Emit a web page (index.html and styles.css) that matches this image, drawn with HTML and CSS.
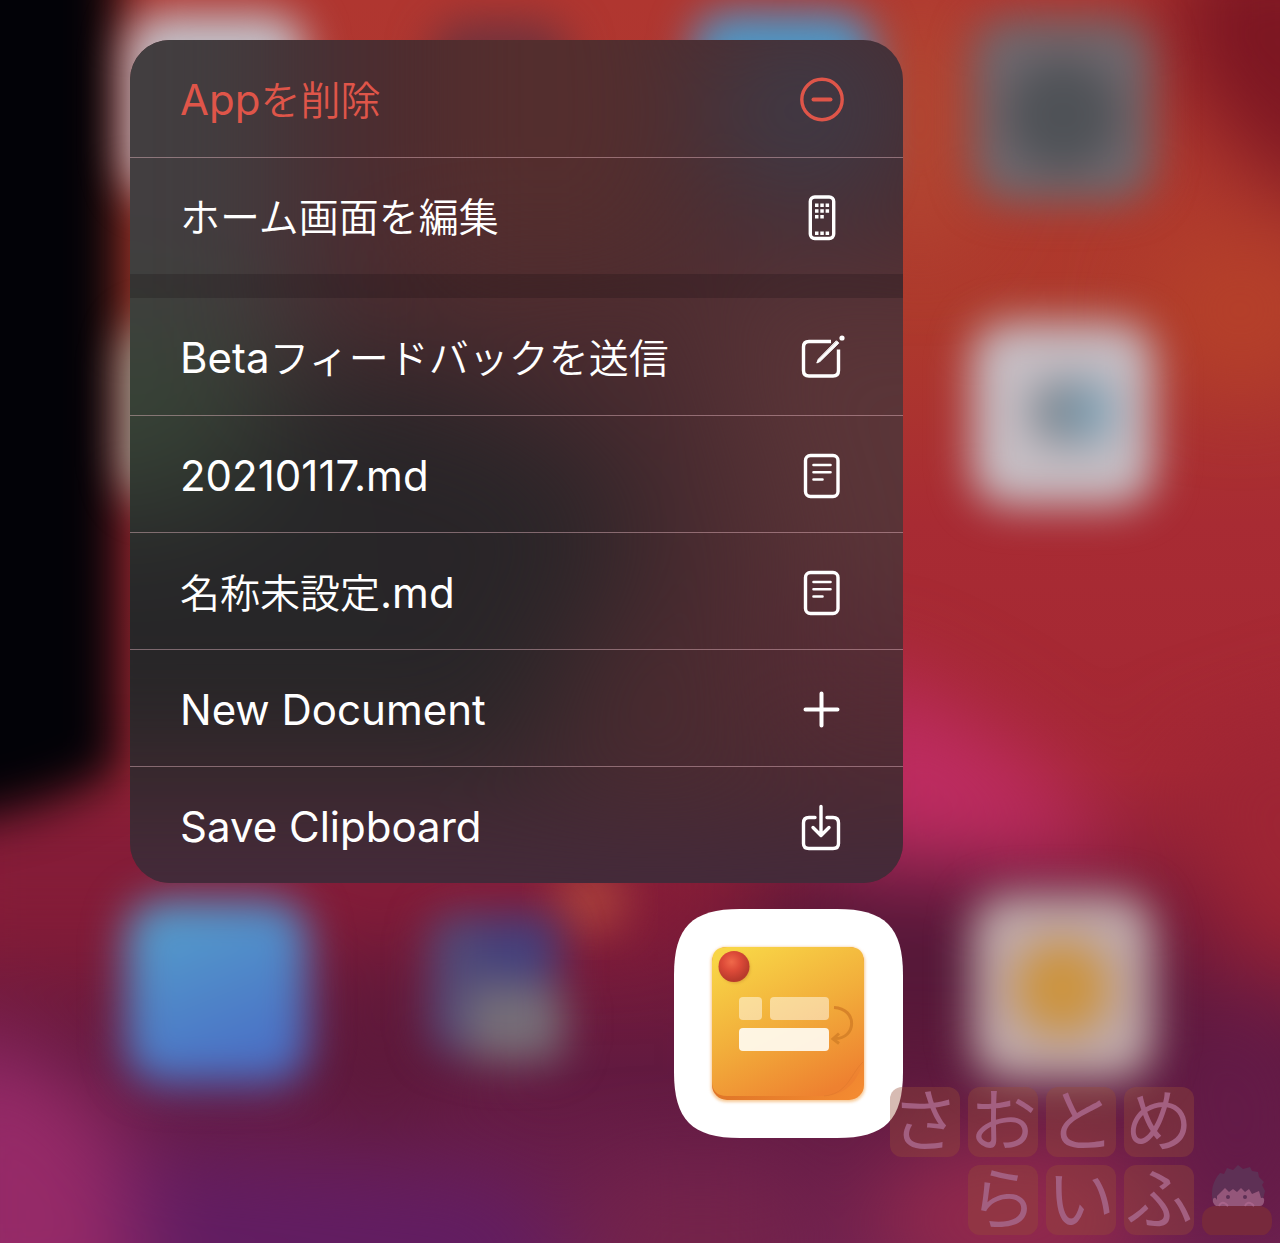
FILE: index.html
```html
<!DOCTYPE html>
<html lang="ja">
<head>
<meta charset="utf-8">
<meta name="viewport" content="width=device-width, initial-scale=1">
<title>ホーム画面</title>
<link rel="stylesheet" href="styles.css">
</head>
<body>
<div class="screen">
  <svg class="wallpaper" viewBox="0 0 1280 1243" preserveAspectRatio="xMidYMid slice" aria-hidden="true">
    <defs>
      <filter id="soft" x="-50%" y="-50%" width="200%" height="200%" color-interpolation-filters="sRGB"><feGaussianBlur stdDeviation="44"/></filter>
      <filter id="edge" x="-50%" y="-50%" width="200%" height="200%" color-interpolation-filters="sRGB"><feGaussianBlur stdDeviation="24"/></filter>
      <filter id="app" x="-50%" y="-50%" width="200%" height="200%" color-interpolation-filters="sRGB"><feGaussianBlur stdDeviation="21"/></filter>
      <linearGradient id="sky" x1="0" y1="0" x2="0" y2="1">
        <stop offset="0" stop-color="#b03630"/><stop offset=".25" stop-color="#ae3a2c"/>
        <stop offset=".42" stop-color="#a82b33"/><stop offset=".62" stop-color="#a42734"/>
        <stop offset=".74" stop-color="#7d1b38"/><stop offset=".86" stop-color="#621a40"/>
        <stop offset="1" stop-color="#6e2150"/>
      </linearGradient>
      <linearGradient id="blue" x1="0" y1="0" x2=".4" y2="1">
        <stop offset="0" stop-color="#56a4cc"/><stop offset="1" stop-color="#4a70c6"/>
      </linearGradient>
    </defs>
    <rect width="1280" height="1243" fill="url(#sky)"/>
    <g filter="url(#soft)">
      <path d="M1170-60h200v280q-110-20-200-160z" fill="#7c1622"/>
      <ellipse cx="1240" cy="310" rx="90" ry="80" fill="#b5402a"/>
      <ellipse cx="920" cy="120" rx="60" ry="130" fill="#b24832"/>
      <path d="M840 660q200 70 280 200l-280 10z" fill="#be2c62"/>
      <path d="M-80 800h760v140h-760z" fill="#841c38"/>
      <path d="M760 870q240-10 380 50l60 160-440-20z" fill="#561839"/>
      <path d="M1170 760l190-60v270l-110-10z" fill="#9e2534"/>
      <path d="M-80 1030q120 0 200 100l60 200h-260z" fill="#962a68"/>
      <path d="M120 1150l400 30 60 140h-440z" fill="#611d62"/>
      <path d="M600 1170h200v160h-200z" fill="#74234a"/>
      <ellipse cx="1010" cy="1220" rx="140" ry="80" fill="#92294c"/>
      <ellipse cx="1240" cy="1120" rx="70" ry="120" fill="#641b48"/>
      <ellipse cx="380" cy="1030" rx="60" ry="90" fill="#5d193a"/>
    </g>
    <path d="M-80-80h200v850q-60 40-200 60z" fill="#020207" filter="url(#edge)"/>
    <ellipse cx="590" cy="900" rx="34" ry="30" fill="#b44a3c" filter="url(#edge)"/>
    <g filter="url(#app)">
      <rect x="126" y="14" width="180" height="184" rx="36" fill="#c2c2ca"/>
      <rect x="430" y="20" width="140" height="170" rx="36" fill="#72323c"/>
      <rect x="692" y="12" width="182" height="186" rx="36" fill="#4c98c8"/>
      <rect x="124" y="322" width="180" height="180" rx="36" fill="#98a89a"/>
      <rect x="973" y="18" width="180" height="184" rx="36" fill="#6e686e"/>
      <ellipse cx="1063" cy="115" rx="56" ry="56" fill="#4f5257"/>
      <rect x="972" y="322" width="182" height="184" rx="36" fill="#c6bec4"/>
      <ellipse cx="1066" cy="412" rx="36" ry="34" fill="#7a8690"/>
      <ellipse cx="1094" cy="412" rx="22" ry="34" fill="#80a2b6"/>
      <rect x="126" y="900" width="182" height="184" rx="36" fill="url(#blue)"/>
      <rect x="430" y="914" width="70" height="140" rx="24" fill="#504a78"/>
      <rect x="480" y="914" width="80" height="70" rx="20" fill="#44407c"/>
      <rect x="466" y="984" width="98" height="78" rx="20" fill="#766e78"/>
      <rect x="972" y="894" width="182" height="186" rx="36" fill="#bfa9aa"/>
      <ellipse cx="1062" cy="988" rx="48" ry="48" fill="#cc9440"/>
    </g>
  </svg>

  <main class="content">
    <nav class="menu" aria-label="Appのアクション">
      <svg class="tint" viewBox="0 0 773 843" preserveAspectRatio="none" aria-hidden="true">
        <defs><filter id="melt" x="-60%" y="-60%" width="220%" height="220%" color-interpolation-filters="sRGB"><feGaussianBlur stdDeviation="64"/></filter></defs>
        <rect width="773" height="843" fill="#4a2b30"/>
        <g filter="url(#melt)">
          <path d="M-150-150h310v480h-310z" fill="#423e40"/>
          <path d="M280-150h270v400h-270z" fill="#542e2e"/>
          <ellipse cx="680" cy="70" rx="100" ry="100" fill="#3e3c48"/>
          <path d="M560 230h400v330h-300z" fill="#5a3538"/>
          <path d="M-150 330h480l110 400h-590z" fill="#272628"/>
          <ellipse cx="370" cy="500" rx="130" ry="130" fill="#292528"/>
          <ellipse cx="-10" cy="370" rx="150" ry="100" fill="#374336"/>
          <path d="M620 560h300v160h-300z" fill="#562b35"/>
          <path d="M-150 790h1100v200h-1100z" fill="#432a3c"/>
        </g>
      </svg>
      <ul class="group">
        <li><button class="item danger" type="button"><span class="label"><span class="latin">App</span>を削除</span>
          <svg class="icon" viewBox="0 0 48 48" aria-hidden="true"><circle cx="24" cy="23.500" r="20.200"/><path class="bold" d="M15.500 23.500h17"/></svg></button></li>
        <li><button class="item" type="button"><span class="label">ホーム画面を編集</span>
          <svg class="icon" viewBox="0 0 48 48" aria-hidden="true"><rect x="12.300" y="4" width="23.400" height="41.500" rx="4.500"/><path class="dots" d="M17 10.500h3.500v3.500H17zM22.300 10.500h3.500v3.500h-3.500zM27.600 10.500h3.500v3.500h-3.500zM17 16.200h3.500v3.500H17zM22.300 16.200h3.500v3.500h-3.500zM27.600 16.200h3.500v3.500h-3.500zM17 21.900h3.500v3.500H17zM22.300 21.900h3.500v3.500h-3.500zM17 38.500h3.500v3.500H17zM22.300 38.500h3.500v3.500h-3.500zM27.600 38.500h3.500v3.500h-3.500z"/></svg></button></li>
      </ul>
      <ul class="group">
        <li><button class="item" type="button"><span class="label"><span class="latin">Beta</span>フィードバックを送信</span>
          <svg class="icon" viewBox="0 0 48 48" aria-hidden="true"><path stroke-linecap="butt" d="M33 7.500H11Q5.500 7.500 5.500 13V36.500Q5.500 42 11 42H35Q40.500 42 40.500 36.500V15.500"/><path class="pen" d="M38.700 7L40.800 9.100L22 27.500L18.800 29L20.200 25.500z"/><circle class="dots" cx="44" cy="4" r="2.600"/></svg></button></li>
        <li><button class="item" type="button"><span class="label"><span class="latin">20210117.md</span></span>
          <svg class="icon" viewBox="0 0 48 48" aria-hidden="true"><rect x="7.500" y="4.500" width="32.500" height="41" rx="5"/><path class="thin" d="M15.500 14h17M15.500 21.200h17M15.500 28.500h9"/></svg></button></li>
        <li><button class="item" type="button"><span class="label">名称未設定<span class="latin">.md</span></span>
          <svg class="icon" viewBox="0 0 48 48" aria-hidden="true"><rect x="7.500" y="4.500" width="32.500" height="41" rx="5"/><path class="thin" d="M15.500 14h17M15.500 21.200h17M15.500 28.500h9"/></svg></button></li>
        <li><button class="item" type="button"><span class="label"><span class="latin">New Document</span></span>
          <svg class="icon" viewBox="0 0 48 48" aria-hidden="true"><path class="bold" d="M7.500 24.500h32M23.500 8.500v32"/></svg></button></li>
        <li><button class="item" type="button"><span class="label"><span class="latin">Save Clipboard</span></span>
          <svg class="icon" viewBox="0 0 48 48" aria-hidden="true"><path d="M17 15.500H11Q5.500 15.500 5.500 21V41.500Q5.500 46.500 11 46.500H35Q40.500 46.500 40.500 41.500V21Q40.500 15.500 35 15.500H29"/><path d="M23 4.500V32.500M15 25.500L23 33.500L31 25.500"/></svg></button></li>
      </ul>
    </nav>

    <button class="app" type="button" aria-label="メモ">
      <svg viewBox="0 0 229 229" aria-hidden="true">
        <defs>
          <linearGradient id="note" x1=".2" y1="0" x2=".7" y2="1"><stop offset="0" stop-color="#f8d546"/><stop offset=".5" stop-color="#f2ae3b"/><stop offset="1" stop-color="#ee8130"/></linearGradient>
          <linearGradient id="curl" x1="0" y1="0" x2="1" y2="1"><stop offset=".5" stop-color="#e07628"/><stop offset="1" stop-color="#f58c32"/></linearGradient>
          <radialGradient id="pin" cx=".42" cy=".35" r=".6"><stop offset="0" stop-color="#f0694a"/><stop offset=".5" stop-color="#dc4a38"/><stop offset="1" stop-color="#b93a2c"/></radialGradient>
          <filter id="glow" x="-10%" y="-10%" width="120%" height="120%"><feGaussianBlur stdDeviation="1.500"/></filter>
        </defs>
        <path d="M66 0H163C211 0 229 18 229 66V163C229 211 211 229 163 229H66C18 229 0 211 0 163V66C0 18 18 0 66 0z" fill="#fff"/>
        <rect x="37" y="38" width="154" height="155" rx="15" fill="#f3a650" opacity=".6" filter="url(#glow)"/>
        <rect x="38" y="38" width="152" height="153" rx="15" fill="url(#curl)"/>
        <path d="M53 38H175Q190 38 190 53V150C184 171 174 186 149 187H53Q38 187 38 172V53Q38 38 53 38z" fill="url(#note)"/>
        <path d="M189 153C177 164 174 185 150 187" fill="none" stroke="#dc782c" stroke-width="1" opacity=".5"/>
        <g class="paper"><rect x="65" y="88" width="23" height="23" rx="4" opacity=".5"/><rect x="96" y="88" width="59" height="23" rx="4" opacity=".5"/><rect x="65" y="119" width="90" height="23" rx="4" opacity=".9"/></g>
        <path d="M160 98.500C184 99.500 183 130.500 160 129.500M165 124.500L159 130L165 134.500" fill="none" stroke="#d78329" stroke-width="3"/>
        <circle cx="61" cy="59" r="15" fill="#a85c20" opacity=".35" filter="url(#glow)"/>
        <circle cx="60" cy="57.500" r="15.500" fill="url(#pin)"/>
      </svg>
    </button>
  </main>

  <div class="logo">
    <span class="tile">さ</span><span class="tile">お</span><span class="tile">と</span><span class="tile">め</span>
    <span class="tile second">ら</span><span class="tile">い</span><span class="tile">ふ</span>
    <svg class="mascot" viewBox="0 0 70 70" aria-hidden="true">
      <path d="M11 38Q7 20 18 8L22 9L25 3L31 5L36 0L41 4L48 2L50 6L56 7L57 12L62 17L60 20L63 26L60 38z" fill="#5e3055"/>
      <path d="M15 31L23 23L27 27L31 24L35 27L39 23L43 27L47 24L50 29L57 26L59 33Q63 32 62 37Q61 41 58 41H14Q10 38 11 34Q13 31 15 35z" fill="#94567a"/>
      <circle cx="26" cy="32" r="2" fill="#5e3055"/><circle cx="43" cy="32" r="2" fill="#5e3055"/>
      <rect y="41" width="70" height="30" rx="13" fill="#77293c"/>
      <path d="M17 41Q19 36 24 39L26 41M43 41Q45 36 50 39L52 41" fill="none" stroke="#a8648a" stroke-width="2"/>
    </svg>
  </div>
</div>
</body>
</html>
```
FILE: styles.css
```css
* { box-sizing: border-box; }

body {
  margin: 0;
  background: #6e2150;
  font-family: Inter, "Noto Sans CJK JP", sans-serif;
}

.screen {
  position: relative;
  min-height: 100vh;
  overflow: hidden;
}

.wallpaper {
  position: absolute;
  inset: 0;
  width: 100%;
  height: 100%;
}

.content {
  position: relative;
  display: flex;
  flex-direction: column;
  align-items: flex-end;
  gap: 26px;
  width: min(100%, 903px);
  padding: 40px 0 105px 130px;
}

.menu {
  position: relative;
  width: 100%;
  overflow: hidden;
  border-radius: 40px;
}

.tint {
  position: absolute;
  inset: 0;
  width: 100%;
  height: 100%;
}

.group {
  position: relative;
  margin: 0;
  padding: 0;
  list-style: none;
}

.group + .group { border-top: 24px solid rgba(20, 10, 14, 0.22); }

.group li + li { border-top: 1px solid rgba(255, 205, 215, 0.4); }

.item {
  display: flex;
  align-items: center;
  justify-content: space-between;
  width: 100%;
  height: 117px;
  padding: 2px 57px 0 50px;
  border: 0;
  background: none;
  color: #fff;
  font: inherit;
  font-size: 40px;
  line-height: 56px;
  text-align: left;
}

.group li + li .item { height: 116px; }

.danger { color: #df5549; }

.label {
  padding-top: 2px;
  font-weight: 350;
}

.latin {
  font-size: 42px;
  font-weight: 400;
}

.icon {
  flex: none;
  width: 48px;
  height: 48px;
  overflow: visible;
  fill: none;
  stroke: currentColor;
  stroke-width: 3.4;
  stroke-linecap: round;
  stroke-linejoin: round;
}

.icon .bold { stroke-width: 4; }
.icon .thin { stroke-width: 2.6; }
.icon .dots { fill: currentColor; stroke: none; }
.icon .pen { fill: currentColor; stroke-width: 1; }

.app {
  width: 229px;
  height: 229px;
  padding: 0;
  border: 0;
  background: none;
}

.app svg { display: block; }

.paper { fill: #fffdf5; }

.logo {
  position: absolute;
  right: 8px;
  bottom: 8px;
  display: grid;
  grid-template-columns: repeat(5, 70px);
  gap: 8px;
}

.tile {
  height: 70px;
  border-radius: 12px;
  background: rgba(150, 76, 55, 0.38);
  color: #a35f80;
  font-size: 68px;
  line-height: 68px;
  text-align: center;
}

.second { grid-column: 2; }

.mascot { width: 70px; height: 70px; }
```
